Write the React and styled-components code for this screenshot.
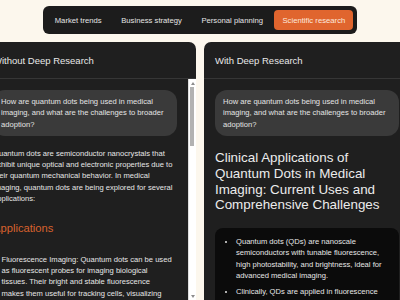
import React from "react";
import styled, { createGlobalStyle } from "styled-components";

const GlobalStyle = createGlobalStyle`
  html, body {
    margin: 0;
    padding: 0;
    background: #fcf7ed;
    overflow: hidden;
  }
  body {
    font-family: "Liberation Sans", Arial, sans-serif;
  }
`;

const tabs = ["Market trends", "Business strategy", "Personal planning", "Scientific research"];

const question =
  "How are quantum dots being used in medical imaging, and what are the challenges to broader adoption?";

function Scrollbar() {
  return (
    <Track>
      <Arrow $dir="up" />
      <Thumb />
      <TrackSpace />
      <Arrow $dir="down" />
    </Track>
  );
}

export default function App() {
  return (
    <Page>
      <GlobalStyle />
      <TabBar>
        {tabs.map((t) => (
          <Tab key={t} $active={t === "Scientific research"}>
            {t}
          </Tab>
        ))}
      </TabBar>
      <Panels>
        <Panel>
          <PanelHeader>Without Deep Research</PanelHeader>
          <PanelBody>
            <Content>
              <Bubble>{question}</Bubble>
              <Para>
                Quantum dots are semiconductor nanocrystals that exhibit unique optical and
                electronic properties due to their quantum mechanical behavior. In medical imaging,
                quantum dots are being explored for several applications:
              </Para>
              <SubHeading>Applications</SubHeading>
              <PlainList>
                <li>
                  Fluorescence Imaging: Quantum dots can be used as fluorescent probes for imaging
                  biological tissues. Their bright and stable fluorescence makes them useful for
                  tracking cells, visualizing tumors, and mapping lymph nodes.
                </li>
                <li>
                  Multiplexed Imaging: Because their emission color depends on size, several
                  targets can be labeled and imaged at the same time.
                </li>
              </PlainList>
            </Content>
            <Scrollbar />
          </PanelBody>
        </Panel>
        <Panel>
          <PanelHeader>With Deep Research</PanelHeader>
          <PanelBody>
            <Content>
              <Bubble>{question}</Bubble>
              <Title>
                Clinical Applications of Quantum Dots in Medical Imaging: Current Uses and
                Comprehensive Challenges
              </Title>
              <SummaryBox>
                <BulletList>
                  <li>
                    Quantum dots (QDs) are nanoscale semiconductors with tunable fluorescence, high
                    photostability, and brightness, ideal for advanced medical imaging.
                  </li>
                  <li>
                    Clinically, QDs are applied in fluorescence guided surgery, sentinel lymph node
                    mapping and tumor targeting.
                  </li>
                </BulletList>
              </SummaryBox>
            </Content>
            <Scrollbar />
          </PanelBody>
        </Panel>
      </Panels>
    </Page>
  );
}

const Page = styled.div`
  width: 400px;
  height: 300px;
  display: flex;
  flex-direction: column;
  align-items: center;
  padding-top: 6px;
  box-sizing: border-box;
  overflow: hidden;
`;

const TabBar = styled.div`
  display: flex;
  gap: 3.5px;
  padding: 4px;
  background: #1c1c1c;
  border-radius: 6px;
`;

const Tab = styled.div`
  height: 20px;
  padding: 0 8px;
  display: flex;
  align-items: center;
  border-radius: 4px;
  font-size: 7.7px;
  white-space: nowrap;
  color: ${(p) => (p.$active ? "#fde9de" : "#e4e4e4")};
  background: ${(p) => (p.$active ? "#e0652e" : "transparent")};
`;

const Panels = styled.div`
  width: 400px;
  margin-top: 8px;
  display: grid;
  grid-template-columns: 214px 214px;
  gap: 8px;
  justify-content: center;
`;

const Panel = styled.section`
  height: 258px;
  display: flex;
  flex-direction: column;
  background: #1f1f1f;
  border-radius: 7px 7px 0 0;
  overflow: hidden;
`;

const PanelHeader = styled.div`
  height: 36px;
  flex: none;
  display: flex;
  align-items: center;
  padding: 0 11px;
  font-size: 9.5px;
  color: #e8e8e8;
  border-bottom: 1px solid #363636;
`;

const PanelBody = styled.div`
  flex: 1;
  min-height: 0;
  display: flex;
`;

const Content = styled.div`
  flex: 1;
  min-width: 0;
  overflow: hidden;
  padding: 11px;
  color: #e6e6e6;
  font-size: 7.6px;
  line-height: 11.3px;
`;

const Track = styled.div`
  width: 8px;
  flex: none;
  display: flex;
  flex-direction: column;
  background: #ffffff;
  border-left: 1px solid #dedede;
  box-sizing: border-box;
`;

const Arrow = styled.div`
  height: 8px;
  flex: none;
  display: flex;
  align-items: center;
  justify-content: center;

  &::before {
    content: "";
    border-left: 2.5px solid transparent;
    border-right: 2.5px solid transparent;
    ${(p) =>
      p.$dir === "up" ? "border-bottom: 3px solid #8c8c8c;" : "border-top: 3px solid #8c8c8c;"}
  }
`;

const Thumb = styled.div`
  height: 59px;
  flex: none;
  margin: 0 2px 0 1px;
  background: #b2b2b2;
`;

const TrackSpace = styled.div`
  flex: 1;
`;

const Bubble = styled.div`
  background: #3a3a3a;
  border-radius: 12px;
  padding: 6px 8px;
  color: #e4e4e4;
`;

const Para = styled.p`
  margin: 12px 0 0;
`;

const SubHeading = styled.h2`
  margin: 18px 0 0;
  font-size: 11.2px;
  line-height: 1.2;
  font-weight: normal;
  color: #d9622e;
`;

const PlainList = styled.ul`
  margin: 18px 0 0;
  padding: 0 3.5px 0 8.5px;
  list-style: none;

  li + li {
    margin-top: 4px;
  }
`;

const Title = styled.h1`
  margin: 14px 0 0;
  font-size: 13.4px;
  line-height: 1.18;
  font-weight: normal;
  color: #ececec;
`;

const SummaryBox = styled.div`
  margin-top: 15px;
  background: #0b0b0b;
  border-radius: 8px;
  padding: 8px 8px 10px;
`;

const BulletList = styled.ul`
  margin: 0;
  padding-left: 13px;

  li + li {
    margin-top: 4.5px;
  }
`;
